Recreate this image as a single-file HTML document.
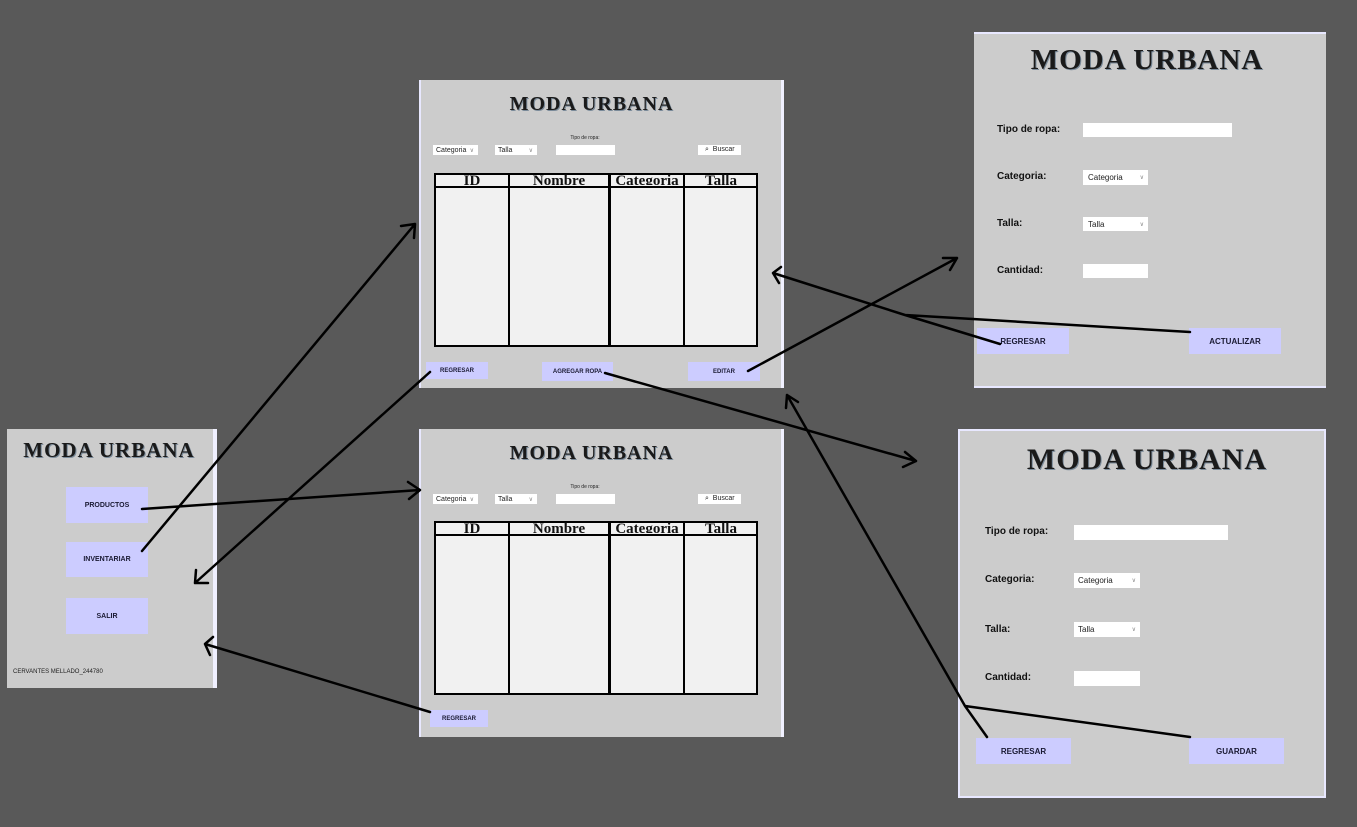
<!DOCTYPE html>
<html><head><meta charset="utf-8"><style>
*{margin:0;padding:0;box-sizing:border-box}
body{width:1357px;height:827px;background:#595959;position:relative;overflow:hidden;font-family:"Liberation Sans",sans-serif}
.p{position:absolute;background:#cccccc}
.a{position:absolute}
.t{position:absolute;font-family:"Liberation Serif",serif;font-weight:bold;color:#1a1a1a;text-align:center;white-space:nowrap;text-shadow:1px 1px 0 #7a8a99;letter-spacing:1px}
.b{position:absolute;background:#ccccff;color:#1a1a33;font-weight:bold;display:flex;align-items:center;justify-content:center}
.w{position:absolute;background:#fff;font-size:7px;color:#222;display:flex;align-items:center;padding-left:3px}
.l{position:absolute;font-weight:bold;font-size:10px;color:#111}
.tbl{position:absolute;background:#f1f1f1;border:2px solid #000}
.c{position:absolute;top:0;bottom:0;border-left:2px solid #000}
.h{position:absolute;font-family:"Liberation Serif",serif;font-size:15px;top:-1px;height:11px;overflow:hidden;line-height:15px;text-align:center;color:#111;font-weight:bold}
.chev{position:absolute;right:4px;font-size:6px;color:#888}
</style></head><body>

<!-- left panel -->
<div class="p" style="left:7px;top:429px;width:210px;height:259px;border-right:4px solid #f0f0ff"></div>
<div class="t" style="left:7px;top:438px;width:204px;font-size:21px">MODA URBANA</div>
<div class="b" style="left:66px;top:487px;width:82px;height:36px;font-size:7px">PRODUCTOS</div>
<div class="b" style="left:66px;top:542px;width:82px;height:35px;font-size:7px">INVENTARIAR</div>
<div class="b" style="left:66px;top:598px;width:82px;height:36px;font-size:7px">SALIR</div>
<div class="a" style="left:13px;top:669px;font-size:6px;color:#222">CERVANTES MELLADO_244780</div>

<!-- top middle -->
<div class="p" style="left:419px;top:80px;width:365px;height:308px;border-left:2px solid #e8e8ff;border-right:3px solid #f0f0ff"></div>
<div class="t" style="left:419px;top:93px;width:345px;font-size:20px">MODA URBANA</div>
<div class="a" style="left:560px;top:135px;width:50px;text-align:center;font-size:5px;color:#222">Tipo de ropa:</div>
<div class="w" style="left:433px;top:145px;width:45px;height:10px">Categoria<span class="chev">∨</span></div>
<div class="w" style="left:495px;top:145px;width:42px;height:10px">Talla<span class="chev">∨</span></div>
<div class="w" style="left:556px;top:145px;width:59px;height:10px"></div>
<div class="w" style="left:698px;top:145px;width:43px;height:10px;padding-left:7px">⌕&nbsp; Buscar</div>
<div class="tbl" style="left:434px;top:173px;width:324px;height:174px">
 <div style="position:absolute;left:0;right:0;top:11px;border-top:2px solid #000"></div>
 <div class="c" style="left:72px"></div><div class="c" style="left:172px;border-left-width:3px"></div><div class="c" style="left:247px"></div>
 <div class="h" style="left:0;width:72px">ID</div><div class="h" style="left:74px;width:98px">Nombre</div><div class="h" style="left:175px;width:72px">Categoria</div><div class="h" style="left:249px;width:72px">Talla</div>
</div>
<div class="b" style="left:426px;top:362px;width:62px;height:17px;font-size:6px">REGRESAR</div>
<div class="b" style="left:542px;top:362px;width:71px;height:19px;font-size:6px">AGREGAR ROPA</div>
<div class="b" style="left:688px;top:362px;width:72px;height:19px;font-size:6px">EDITAR</div>

<!-- bottom middle -->
<div class="p" style="left:419px;top:429px;width:365px;height:308px;border-left:2px solid #e8e8ff;border-right:3px solid #f0f0ff"></div>
<div class="t" style="left:419px;top:442px;width:345px;font-size:20px">MODA URBANA</div>
<div class="a" style="left:560px;top:484px;width:50px;text-align:center;font-size:5px;color:#222">Tipo de ropa:</div>
<div class="w" style="left:433px;top:494px;width:45px;height:10px">Categoria<span class="chev">∨</span></div>
<div class="w" style="left:495px;top:494px;width:42px;height:10px">Talla<span class="chev">∨</span></div>
<div class="w" style="left:556px;top:494px;width:59px;height:10px"></div>
<div class="w" style="left:698px;top:494px;width:43px;height:10px;padding-left:7px">⌕&nbsp; Buscar</div>
<div class="tbl" style="left:434px;top:521px;width:324px;height:174px">
 <div style="position:absolute;left:0;right:0;top:11px;border-top:2px solid #000"></div>
 <div class="c" style="left:72px"></div><div class="c" style="left:172px;border-left-width:3px"></div><div class="c" style="left:247px"></div>
 <div class="h" style="left:0;width:72px">ID</div><div class="h" style="left:74px;width:98px">Nombre</div><div class="h" style="left:175px;width:72px">Categoria</div><div class="h" style="left:249px;width:72px">Talla</div>
</div>
<div class="b" style="left:430px;top:710px;width:58px;height:17px;font-size:6px">REGRESAR</div>

<!-- top right -->
<div class="p" style="left:974px;top:32px;width:352px;height:356px;border-top:2px solid #e8e8ff;border-bottom:2px solid #e8e8ff"></div>
<div class="t" style="left:974px;top:44px;width:346px;font-size:29px">MODA URBANA</div>
<div class="l" style="left:997px;top:124px">Tipo de ropa:</div>
<div class="l" style="left:997px;top:171px">Categoria:</div>
<div class="l" style="left:997px;top:218px">Talla:</div>
<div class="l" style="left:997px;top:265px">Cantidad:</div>
<div class="w" style="left:1083px;top:123px;width:149px;height:14px"></div>
<div class="w" style="left:1083px;top:170px;width:65px;height:15px;font-size:8px;padding-left:5px">Categoria<span class="chev">∨</span></div>
<div class="w" style="left:1083px;top:217px;width:65px;height:14px;font-size:8px;padding-left:5px">Talla<span class="chev">∨</span></div>
<div class="w" style="left:1083px;top:264px;width:65px;height:14px"></div>
<div class="b" style="left:977px;top:328px;width:92px;height:26px;font-size:8px">REGRESAR</div>
<div class="b" style="left:1189px;top:328px;width:92px;height:26px;font-size:8px">ACTUALIZAR</div>

<!-- bottom right -->
<div class="p" style="left:958px;top:429px;width:368px;height:369px;border:2px solid #e8e8ff"></div>
<div class="t" style="left:958px;top:443px;width:378px;font-size:30px">MODA URBANA</div>
<div class="l" style="left:985px;top:526px">Tipo de ropa:</div>
<div class="l" style="left:985px;top:574px">Categoria:</div>
<div class="l" style="left:985px;top:624px">Talla:</div>
<div class="l" style="left:985px;top:672px">Cantidad:</div>
<div class="w" style="left:1074px;top:525px;width:154px;height:15px"></div>
<div class="w" style="left:1074px;top:573px;width:66px;height:15px;font-size:8px;padding-left:4px">Categoria<span class="chev">∨</span></div>
<div class="w" style="left:1074px;top:622px;width:66px;height:15px;font-size:8px;padding-left:4px">Talla<span class="chev">∨</span></div>
<div class="w" style="left:1074px;top:671px;width:66px;height:15px"></div>
<div class="b" style="left:976px;top:738px;width:95px;height:26px;font-size:8px">REGRESAR</div>
<div class="b" style="left:1189px;top:738px;width:95px;height:26px;font-size:8px">GUARDAR</div>

<svg width="1357" height="827" style="position:absolute;left:0;top:0" fill="none" stroke="#000" stroke-width="2.5" stroke-linecap="round" stroke-linejoin="round">
<path d="M142 551 L415 224 M401 226 L415 224 L414 238"/>
<path d="M142 509 L420 490 M408 482 L420 490 L409 499"/>
<path d="M430 372 L195 583 M196 570 L195 583 L208 583"/>
<path d="M430 712 L205 644 M213 637 L205 644 L210 655"/>
<path d="M748 371 L957 258 M943 258 L957 258 L950 270"/>
<path d="M605 373 L916 461 M905 452 L916 461 L903 467"/>
<path d="M1000 344 L905 315 L1190 332 M905 315 L773 273 M781 267 L773 273 L779 283"/>
<path d="M987 737 L965 706 L1190 737 M965 706 L787 395 M786 408 L787 395 L798 402"/>
</svg>
</body></html>
